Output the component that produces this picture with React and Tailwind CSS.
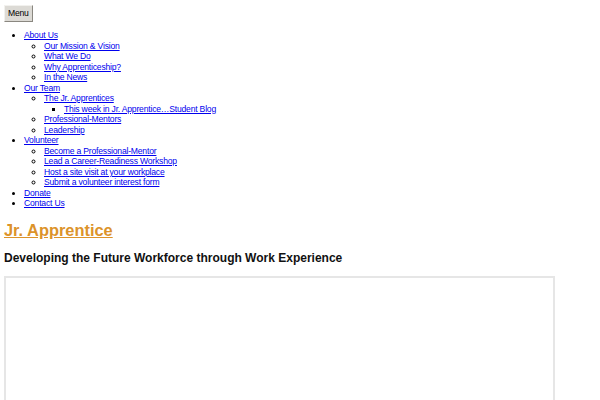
import React from "react";

const L = ({ children }) => (
  <a href="#" className="text-[#0000ee] underline">
    {children}
  </a>
);

export default function App() {
  return (
    <div className="bg-white min-h-[400px] px-[4px] pt-[5px] text-black overflow-hidden" style={{ fontFamily: '"Liberation Sans", Arial, sans-serif' }}>
      <button className="block h-[17px] px-[3px] text-[8.6px] tracking-[-0.2px] leading-none bg-[#dcdad5] border border-[#8a8780] border-t-[#f2f1ee] border-l-[#f2f1ee] text-black" style={{ fontFamily: '"Liberation Sans", Arial, sans-serif' }}>
        Menu
      </button>
      <ul className="list-disc pl-[20px] mt-[8.25px] text-[8.6px] tracking-[-0.2px] leading-[10.5px] text-black">
        <li><L>About Us</L>
          <ul className="list-[circle] pl-[20px]">
            <li><L>Our Mission &amp; Vision</L></li>
            <li><L>What We Do</L></li>
            <li><L>Why Apprenticeship?</L></li>
            <li><L>In the News</L></li>
          </ul>
        </li>
        <li><L>Our Team</L>
          <ul className="list-[circle] pl-[20px]">
            <li><L>The Jr. Apprentices</L>
              <ul className="list-[square] pl-[20px]">
                <li><L>This week in Jr. Apprentice…Student Blog</L></li>
              </ul>
            </li>
            <li><L>Professional-Mentors</L></li>
            <li><L>Leadership</L></li>
          </ul>
        </li>
        <li><L>Volunteer</L>
          <ul className="list-[circle] pl-[20px]">
            <li><L>Become a Professional-Mentor</L></li>
            <li><L>Lead a Career-Readiness Workshop</L></li>
            <li><L>Host a site visit at your workplace</L></li>
            <li><L>Submit a volunteer interest form</L></li>
          </ul>
        </li>
        <li><L>Donate</L></li>
        <li><L>Contact Us</L></li>
      </ul>
      <h1 className="mt-[11.5px] text-[16.4px] leading-[20px] font-bold">
        <a href="#" className="text-[#dc932a] underline">Jr. Apprentice</a>
      </h1>
      <h2 className="mt-[10.5px] text-[12px] leading-[15px] font-bold text-[#111]">
        Developing the Future Workforce through Work Experience
      </h2>
      <div className="mt-[10px] w-[551px] h-[200px] border-2 border-[#e6e6e6] border-b-0"></div>
    </div>
  );
}
